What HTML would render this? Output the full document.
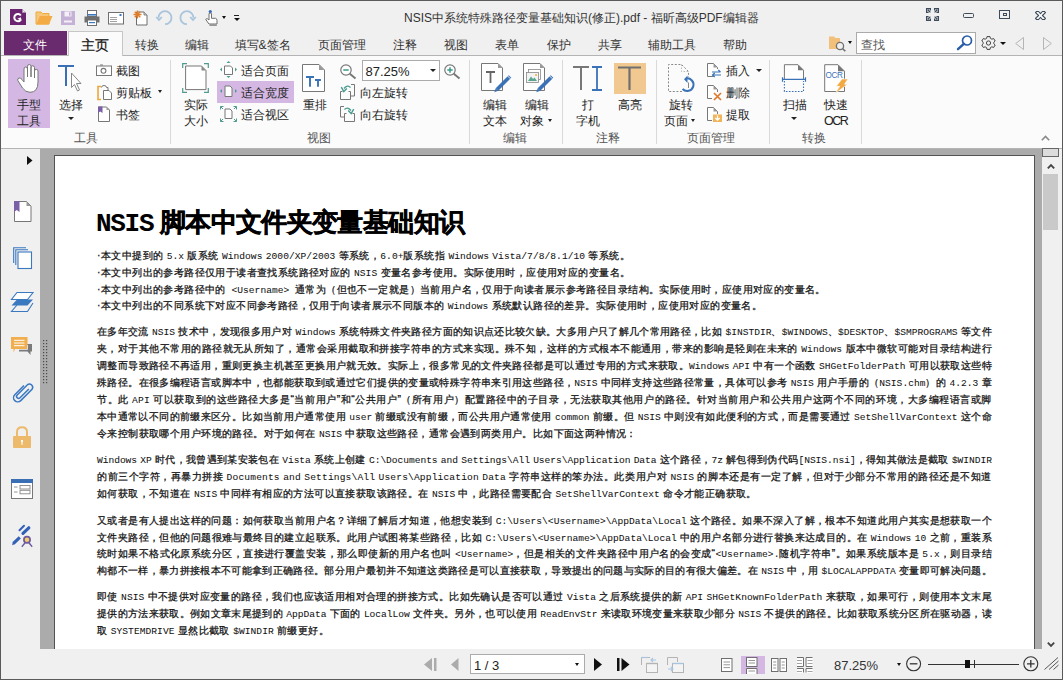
<!DOCTYPE html>
<html><head><meta charset="utf-8">
<style>
*{box-sizing:border-box;margin:0;padding:0}
html,body{width:1063px;height:680px;overflow:hidden}
body{position:relative;background:#f0f0f0;font-family:"Liberation Sans",sans-serif;font-size:12px;color:#222}
.a{position:absolute}
svg{position:absolute;overflow:visible}
.frame{position:absolute;left:0;top:0;width:1063px;height:680px;border:1px solid #5a5a5a;pointer-events:none;z-index:50}
.t{position:absolute;font-size:12px;line-height:12px;color:#222;white-space:nowrap}
.tab{position:absolute;top:39px;font-size:12px;line-height:12px;color:#333;white-space:nowrap}
.ribbon{left:1px;top:55px;width:1061px;height:94px;background:#fbfbfb;border-top:1px solid #b4b4b4;border-bottom:1px solid #b4b4b4}
.gl{position:absolute;top:132px;font-size:12px;line-height:12px;color:#555;white-space:nowrap}
.sep{position:absolute;top:60px;width:1px;height:84px;background:#dadada}
.doc{left:40px;top:149px;width:1002px;height:500px;background:#ababab}
.page{left:54px;top:155px;width:981px;height:494px;background:#fff;border-left:1px solid #525252;border-top:1px solid #525252;border-right:1px solid #525252}
.ln{position:absolute;left:97px;font-size:10.4px;-webkit-text-stroke:0.25px #111;letter-spacing:0.41px;--m:0.04px;line-height:14px;color:#111;white-space:nowrap}
.j{text-align:justify;text-align-last:justify}
.ln i{font-style:normal;font-family:"Liberation Mono",monospace;font-size:9.6px;letter-spacing:var(--m);-webkit-text-stroke:0.05px #111}
i.tm{font-style:normal;font-family:"Liberation Mono",monospace;letter-spacing:-1.3px}
.side{left:1px;top:149px;width:39px;height:500px;background:#f0f0f0}
.status{left:1px;top:649px;width:1061px;height:30px;background:#f0f0f0}
.vs{left:1042px;top:149px;width:20px;height:500px;background:#f0f0f0}
.dd{position:absolute;width:0;height:0;border-left:3px solid transparent;border-right:3px solid transparent;border-top:3px solid #222}
</style></head><body>

<div class="frame"></div>
<!-- ===== title bar ===== -->
<!-- logo -->
<svg style="left:10px;top:9px" width="16" height="16" viewBox="0 0 16 16"><path d="M0 0H12L16 4V16H0Z" fill="#6b2470"/><path d="M12 0L16 4H12Z" fill="#f0f0f0"/><path d="M12.3 0.3V3.7H15.7" fill="none" stroke="#6b2470" stroke-width="0.6"/><path d="M10.8 6.5A3.6 3.6 0 1 0 10.6 11" fill="none" stroke="#fff" stroke-width="2"/><path d="M7.3 9.8L10.8 8.3L11.8 11.8Z" fill="#fff"/></svg>
<!-- folder -->
<svg style="left:36px;top:11px" width="17" height="14" viewBox="0 0 17 14"><path d="M0 1H5L6.5 2.5H13V5H3.5L0 13Z" fill="#f6c67a"/><path d="M0 1H5L6.5 2.5H13V13H0Z" fill="none" stroke="#f0a93c" stroke-width="1"/><path d="M3.5 5H16.5L13 13.5H0Z" fill="#f3ab45"/></svg>
<!-- save -->
<svg style="left:61px;top:11px" width="14" height="14" viewBox="0 0 14 14"><rect x="0" y="0" width="14" height="14" fill="#c5b1d5"/><rect x="3.5" y="0.5" width="7" height="5" fill="#f5f0f8"/><rect x="8" y="1.2" width="1.5" height="3.5" fill="#c5b1d5"/><rect x="3" y="9.5" width="8" height="2" fill="#f5f0f8"/></svg>
<!-- print -->
<svg style="left:84px;top:10px" width="16" height="16" viewBox="0 0 16 16"><rect x="3.5" y="0.5" width="9" height="6" fill="#fff" stroke="#6f6f6f"/><rect x="4" y="4" width="8" height="1.6" fill="#3a78c0"/><path d="M0.5 6.5H15.5V12.5H12.5V10H3.5V12.5H0.5Z" fill="#6f6f6f"/><rect x="3.5" y="10" width="9" height="5.5" fill="#fff" stroke="#6f6f6f"/><rect x="5" y="12" width="6" height="1.2" fill="#3a78c0"/></svg>
<!-- email -->
<svg style="left:108px;top:12px" width="16" height="13" viewBox="0 0 16 13"><rect x="0.5" y="0.5" width="15" height="11.5" fill="#fff" stroke="#6f6f6f"/><rect x="11.5" y="2" width="2" height="2" fill="#3a78c0"/><path d="M2 5.5H9M2 7.5H9M2 9.5H9" stroke="#8a8a8a" stroke-width="0.8"/></svg>
<!-- new -->
<svg style="left:133px;top:10px" width="15" height="16" viewBox="0 0 15 16"><path d="M3.5 2H11L14 5V15H3.5Z" fill="#fff" stroke="#6f6f6f"/><path d="M11 2V5H14" fill="#cfcfcf" stroke="#6f6f6f" stroke-width="0.8"/><path d="M4.5 0.5V8.5M0.5 4.5H8.5M1.7 1.7L7.3 7.3M7.3 1.7L1.7 7.3" stroke="#e07d2a" stroke-width="1.3"/></svg>
<!-- undo / redo -->
<svg style="left:150px;top:5px" width="50" height="25" viewBox="0 0 50 25"><g fill="none" stroke="#a9c4dd" stroke-width="1.8"><path d="M8.5 12.7A6.5 6.5 0 1 1 15 19.2"/><path d="M6.3 12L9 15L11.8 12"/><path d="M43.4 12.7A6.5 6.5 0 1 0 36.9 19.2"/><path d="M40.2 12L43 15L45.8 12"/></g></svg>
<!-- touch hand -->
<svg style="left:205px;top:10px" width="15" height="16" viewBox="0 0 15 16"><circle cx="5.3" cy="1.6" r="1.6" fill="#3868b8"/><path d="M4 3.5V10L2.5 8.8Q0.8 8.3 0.8 9.6L4 14H12V10.5Q12 8.5 10.5 8.3H6.5V3.5Q5.3 2.6 4 3.5Z" fill="#fff" stroke="#6f6f6f" stroke-width="1"/><path d="M4.5 15.2H11.8" stroke="#6f6f6f" stroke-width="1"/></svg>
<div class="dd" style="left:222px;top:16px;border-left-width:2.5px;border-right-width:2.5px;border-top-width:3.5px;border-top-color:#111"></div>
<div class="a" style="left:234px;top:15px;width:5px;height:1px;background:#222"></div>
<div class="dd" style="left:233.5px;top:17.5px;border-top-color:#111;border-top-width:3.5px"></div>
<!-- title -->
<div class="t" id="ttl" style="left:404px;top:12px;color:#333">NSIS中系统特殊路径变量基础知识(修正).pdf - 福昕高级PDF编辑器</div>
<!-- window controls -->
<svg style="left:926px;top:8px" width="13" height="13" viewBox="0 0 13 13"><path d="M2.6 4.4H0.6V0.6H4.4V2.6M1.8 1.8L4.4 4.4M10.4 4.4H12.4V0.6H8.6V2.6M11.2 1.8L8.6 4.4M2.6 8.6H0.6V12.4H4.4V10.4M1.8 11.2L4.4 8.6M10.4 8.6H12.4V12.4H8.6V10.4M11.2 11.2L8.6 8.6" fill="none" stroke="#3e4b5b" stroke-width="1.25"/></svg>
<div class="a" style="left:963px;top:13px;width:11px;height:5px;border:1.3px solid #3e4b5b;border-radius:1.5px"></div>
<div class="a" style="left:999px;top:10px;width:11px;height:9px;border:1.3px solid #3e4b5b"></div>
<div class="a" style="left:1002.5px;top:13.3px;width:4px;height:2.5px;border:1px solid #3e4b5b"></div>
<svg style="left:1035px;top:11px" width="11" height="9" viewBox="0 0 11 9"><path d="M0.5 1.6L1.6 0.5H3.6L5.5 2.7L7.4 0.5H9.4L10.5 1.6L7.4 4.5L10.5 7.4L9.4 8.5H7.4L5.5 6.3L3.6 8.5H1.6L0.5 7.4L3.6 4.5Z" fill="#fbfbfb" stroke="#3e4b5b" stroke-width="1.1" stroke-linejoin="round"/></svg>

<!-- ===== tabs ===== -->
<div class="a" style="left:4px;top:31px;width:63px;height:24px;background:#6a2a6e"></div>
<div class="tab" style="left:22.5px;top:39px;color:#fff">文件</div>
<div class="a" style="left:68px;top:31px;width:55px;height:25px;background:#fbfbfb;border:1px solid #c6c6c6;border-bottom:none;z-index:2"></div>
<div class="tab" style="left:81px;top:38px;font-size:14px;line-height:14px;color:#111;z-index:3;-webkit-text-stroke:0.2px #111">主页</div>
<div class="tab" style="left:134.5px">转换</div>
<div class="tab" style="left:184.5px">编辑</div>
<div class="tab" style="left:234.5px">填写&amp;签名</div>
<div class="tab" style="left:318px">页面管理</div>
<div class="tab" style="left:392.5px">注释</div>
<div class="tab" style="left:444px">视图</div>
<div class="tab" style="left:495px">表单</div>
<div class="tab" style="left:546.5px">保护</div>
<div class="tab" style="left:597.5px">共享</div>
<div class="tab" style="left:648px">辅助工具</div>
<div class="tab" style="left:723px">帮助</div>
<!-- search area -->
<svg style="left:829px;top:36px" width="17" height="16" viewBox="0 0 17 16"><path d="M0 0.5H5L6.5 2H11V13H0Z" fill="#f2c07a"/><circle cx="11" cy="10" r="3.6" fill="#f0f0f0" stroke="#6f6f6f" stroke-width="1.3"/><path d="M13.5 12.5L16.3 15.3" stroke="#6f6f6f" stroke-width="1.6"/></svg>
<div class="dd" style="left:848px;top:41px;border-left-width:2.5px;border-right-width:2.5px;border-top-width:3px;border-top-color:#111"></div>
<div class="a" style="left:856px;top:32px;width:120px;height:22px;background:#fff;border:1px solid #ababab"></div>
<div class="t" style="left:860.5px;top:38.5px;color:#555">查找</div>
<svg style="left:957px;top:35px" width="16" height="15" viewBox="0 0 16 15"><circle cx="10" cy="5.5" r="4.5" fill="none" stroke="#2a5da8" stroke-width="1.7"/><path d="M6.8 8.8L1 14.2" stroke="#2a5da8" stroke-width="2.4" stroke-linecap="round"/></svg>
<svg style="left:981px;top:36px" width="15" height="14" viewBox="0 0 15 14"><path d="M6 0.6H9L9.4 2.4L10.9 3.2L12.6 2.5L14.2 5L12.8 6.3V7.7L14.2 9L12.6 11.5L10.9 10.8L9.4 11.6L9 13.4H6L5.6 11.6L4.1 10.8L2.4 11.5L0.8 9L2.2 7.7V6.3L0.8 5L2.4 2.5L4.1 3.2L5.6 2.4Z" fill="none" stroke="#454545" stroke-width="1"/><circle cx="7.5" cy="7" r="2.1" fill="none" stroke="#454545" stroke-width="1"/></svg>
<div class="dd" style="left:999.5px;top:41.5px;border-left-width:3px;border-right-width:3px;border-top-width:3.5px;border-top-color:#111"></div>
<svg style="left:1015px;top:37px" width="9" height="13" viewBox="0 0 9 13"><path d="M8.5 0.5V12.5L0.7 6.5Z" fill="none" stroke="#b5b5b5" stroke-width="1"/></svg>
<svg style="left:1043px;top:37px" width="9" height="13" viewBox="0 0 9 13"><path d="M0.5 0.5V12.5L8.3 6.5Z" fill="none" stroke="#b5b5b5" stroke-width="1"/></svg>

<!-- ===== ribbon ===== -->
<div class="a ribbon"></div>
<!-- group: tools -->
<div class="a" style="left:8px;top:59px;width:42px;height:69px;background:#d4b8e3"></div>
<svg style="left:17px;top:64px" width="24" height="29" viewBox="0 0 24 29"><path d="M7 15V5Q7 3 8.8 3Q10.5 3 10.5 5V13V2.3Q10.5 0.5 12.3 0.5Q14 0.5 14 2.3V13V3.5Q14 1.8 15.8 1.8Q17.5 1.8 17.5 3.5V14V7Q17.5 5.3 19.2 5.3Q21 5.3 21 7V18Q21 28.3 13 28.3Q8.5 28.3 5.5 24L0.8 16.5Q0.2 14.5 2 14Q3.5 13.7 5 15.5L7 18Z" fill="#fff" stroke="#777" stroke-width="1"/></svg>
<div class="t" style="left:17px;top:99px">手型</div>
<div class="t" style="left:17px;top:115px">工具</div>
<svg style="left:58px;top:65px" width="26" height="27" viewBox="0 0 26 27"><path d="M0 1H16M8 1V21" stroke="#3b6fb5" stroke-width="2"/><path d="M13.5 8V22.5L16.5 19.5L19.5 26L21.5 25L18.5 18.5H23Z" fill="#fff" stroke="#888" stroke-width="1"/></svg>
<div class="t" style="left:58.5px;top:99px">选择</div>
<div class="dd" style="left:67.5px;top:117px;border-left-width:3px;border-right-width:3px;border-top-width:3px"></div>
<svg style="left:96px;top:64px" width="16" height="12" viewBox="0 0 16 12"><path d="M4 1.5H7V0.5H4Z" fill="#777"/><rect x="0.5" y="2" width="15" height="9.5" fill="#fff" stroke="#777"/><circle cx="7.5" cy="6.8" r="2.4" fill="none" stroke="#777" stroke-width="1.1"/></svg>
<div class="t" style="left:116px;top:65px">截图</div>
<svg style="left:97px;top:85px" width="15" height="15" viewBox="0 0 15 15"><path d="M4 1.5H1V14.5H4" fill="none" stroke="#f0a63a" stroke-width="1.6"/><path d="M4.5 2.5Q4.5 0.5 7 0.5Q9.5 0.5 9.5 2.5H11V5" fill="none" stroke="#777" stroke-width="1"/><path d="M6.5 5.5H12L14.5 8V14.5H6.5Z" fill="#fff" stroke="#777"/></svg>
<div class="t" style="left:116px;top:87px">剪贴板</div>
<div class="dd" style="left:158px;top:90px;border-left-width:2.7px;border-right-width:2.7px;border-top-width:3px"></div>
<svg style="left:98px;top:106px" width="12" height="16" viewBox="0 0 12 16"><path d="M0.5 1H8.5L11.5 4V15.5H0.5Z" fill="#fff" stroke="#777"/><path d="M8.5 1V4H11.5" fill="#999"/><path d="M0 0.5H4.5V7L2.2 5.5L0 7Z" fill="#7b5ea8"/></svg>
<div class="t" style="left:116px;top:109px">书签</div>
<div class="gl" style="left:74px">工具</div>
<div class="sep" style="left:170px"></div>
<!-- group: view -->
<svg style="left:182px;top:63px" width="28" height="30" viewBox="0 0 28 30"><path d="M0.7 5V0.7H5M22 0.7H26.3V5M0.7 25V29.3H5M22 29.3H26.3V25" fill="none" stroke="#4f9a8e" stroke-width="1.2"/><path d="M3.6 3H19.5L24 7.5V26.6H3.6Z" fill="#fff" stroke="#777" stroke-width="1"/><path d="M19.5 3V7.5H24Z" fill="#888"/></svg>
<div class="t" style="left:184px;top:99px">实际</div>
<div class="t" style="left:184px;top:115px">大小</div>
<svg style="left:220px;top:61px" width="17" height="17" viewBox="0 0 17 17"><path d="M4.5 5H10.5L12.5 7V13.5H4.5Z" fill="#fff" stroke="#777"/><path d="M8.5 0L10.5 2H6.5ZM8.5 17L10.5 15H6.5ZM0 8.5L2 6.5V10.5ZM17 8.5L15 6.5V10.5Z" fill="#4f9a8e"/></svg>
<div class="t" style="left:241px;top:65px">适合页面</div>
<div class="a" style="left:217px;top:81px;width:77px;height:22px;background:#d4b8e3"></div>
<svg style="left:220px;top:84px" width="17" height="14" viewBox="0 0 17 14"><path d="M5 2H10L12 4V12.5H5Z" fill="#fff" stroke="#777"/><path d="M0 7L2 5V9ZM17 7L15 5V9Z" fill="#4f9a8e"/></svg>
<div class="t" style="left:241px;top:87px">适合宽度</div>
<svg style="left:220px;top:106px" width="17" height="16" viewBox="0 0 17 16"><path d="M5 3H10L12 5V12.5H5Z" fill="#fff" stroke="#777"/><path d="M0.5 3.5V0.5H3.5M13.5 0.5H16.5V3.5M0.5 12.5V15.5H3.5M13.5 15.5H16.5V12.5M0.7 0.7L3 3M16.3 0.7L14 3M0.7 15.3L3 13M16.3 15.3L14 13" fill="none" stroke="#4f9a8e" stroke-width="1"/></svg>
<div class="t" style="left:241px;top:109px">适合视区</div>
<svg style="left:302px;top:64px" width="23" height="28" viewBox="0 0 23 28"><path d="M0.5 0.5H17L22.5 6V27.5H0.5Z" fill="#fff" stroke="#777"/><path d="M17 0.5V6H22.5Z" fill="#999"/><path d="M4 13H12M8 13V22.7M13 16H18.9M16 16V22.7" stroke="#3a72b8" stroke-width="1.9"/></svg>
<div class="t" style="left:303px;top:99px">重排</div>
<svg style="left:340px;top:64px" width="17" height="15" viewBox="0 0 17 15"><circle cx="6" cy="6" r="5.2" fill="#fff" stroke="#777" stroke-width="1.2"/><path d="M3.3 6H8.7" stroke="#3a9a8a" stroke-width="1.5"/><path d="M9.8 9.8L15.5 14.5" stroke="#777" stroke-width="2"/></svg>
<div class="a" style="left:362px;top:59.5px;width:78px;height:21px;background:#fff;border:1px solid #ababab"></div>
<div class="a" style="left:365.5px;top:64.5px;font-size:13px;line-height:13px;color:#222">87.25%</div>
<div class="dd" style="left:429.5px;top:69px;border-left-width:3px;border-right-width:3px;border-top-width:3px"></div>
<svg style="left:444px;top:64px" width="17" height="15" viewBox="0 0 17 15"><circle cx="6" cy="6" r="5.2" fill="#fff" stroke="#777" stroke-width="1.2"/><path d="M3.3 6H8.7M6 3.3V8.7" stroke="#3a9a8a" stroke-width="1.5"/><path d="M9.8 9.8L15.5 14.5" stroke="#777" stroke-width="2"/></svg>
<svg style="left:340px;top:84px" width="15" height="16" viewBox="0 0 15 16"><path d="M11 0.5H14.5V12H11" fill="none" stroke="#777" stroke-width="1"/><path d="M0.5 7.5V15.5H10.5V7.5M0.5 7.5H2.5M8.5 7.5H10.5" fill="none" stroke="#777" stroke-width="1"/><path d="M10.5 3.5Q7.5 0.2 4 4.5" fill="none" stroke="#4a9a8e" stroke-width="1.3"/><path d="M1.3 3.2L3.8 7.5L6.8 4.5" fill="none" stroke="#4a9a8e" stroke-width="1.4"/></svg>
<div class="t" style="left:360px;top:87px">向左旋转</div>
<svg style="left:340px;top:106px" width="15" height="16" viewBox="0 0 15 16"><path d="M4 0.5H0.5V11H4" fill="none" stroke="#777" stroke-width="1"/><path d="M4.5 7.5V15.5H14.5V7.5M4.5 7.5H6.5M12.5 7.5H14.5" fill="none" stroke="#777" stroke-width="1"/><path d="M4.5 3.5Q7.5 0.2 11 4.5" fill="none" stroke="#4a9a8e" stroke-width="1.3"/><path d="M13.7 3.2L11.2 7.5L8.2 4.5" fill="none" stroke="#4a9a8e" stroke-width="1.4"/></svg>
<div class="t" style="left:360px;top:109px">向右旋转</div>
<div class="gl" style="left:307px">视图</div>
<div class="sep" style="left:469px"></div>
<!-- group: edit -->
<svg style="left:481px;top:63px" width="31" height="30" viewBox="0 0 31 30"><path d="M0.5 0.5H17L21.5 5V27.5H0.5Z" fill="#fff" stroke="#777"/><path d="M17 0.5V5H21.5Z" fill="#999"/><path d="M5 9H14M9.5 9V20" stroke="#666" stroke-width="1.8"/><path d="M17.3 27.8L30.3 14.8L27.7 12.2L14.7 25.2Z" fill="#3a72b8"/><path d="M17.3 27.8L14.7 25.2L13.3 29.2Z" fill="#3a72b8"/><path d="M26.2 12.6L29.4 15.8" stroke="#fbfbfb" stroke-width="0.9"/></svg>
<div class="t" style="left:483px;top:99px">编辑</div>
<div class="t" style="left:483px;top:115px">文本</div>
<svg style="left:523px;top:63px" width="31" height="30" viewBox="0 0 31 30"><path d="M0.5 0.5H17L21.5 5V27.5H0.5Z" fill="#fff" stroke="#777"/><path d="M17 0.5V5H21.5Z" fill="#999"/><rect x="5.5" y="6.5" width="12" height="10" fill="#fff" stroke="#888" stroke-width="0.8"/><rect x="3.5" y="9.5" width="12" height="10" fill="#f3f3f3" stroke="#888" stroke-width="0.8"/><path d="M5 18L8 13.5L10 16L11.5 14.5L14 18Z" fill="#5aa58e"/><circle cx="13" cy="12" r="1" fill="#f0b040"/><path d="M17.3 27.8L30.3 14.8L27.7 12.2L14.7 25.2Z" fill="#3a72b8"/><path d="M17.3 27.8L14.7 25.2L13.3 29.2Z" fill="#3a72b8"/><path d="M26.2 12.6L29.4 15.8" stroke="#fbfbfb" stroke-width="0.9"/></svg>
<div class="t" style="left:525px;top:99px">编辑</div>
<div class="t" style="left:520px;top:115px">对象</div>
<div class="dd" style="left:547.5px;top:118.5px;border-left-width:2.7px;border-right-width:2.7px;border-top-width:3px"></div>
<div class="gl" style="left:503px">编辑</div>
<div class="sep" style="left:562px"></div>
<!-- group: comment -->
<svg style="left:573px;top:66px" width="30" height="25" viewBox="0 0 30 25"><path d="M0 1H16M8 1V24" stroke="#777" stroke-width="2"/><path d="M19 1H29M24 1V24M19 24H29" stroke="#3a72b8" stroke-width="1.8"/></svg>
<div class="t" style="left:581.5px;top:99px">打</div>
<div class="t" style="left:576px;top:115px">字机</div>
<div class="a" style="left:614px;top:63px;width:32px;height:31px;background:#f1c88f"></div>
<svg style="left:618px;top:66px" width="24" height="25" viewBox="0 0 24 25"><path d="M0 1.5H23M11.5 1.5V24" stroke="#707070" stroke-width="2.2"/></svg>
<div class="t" style="left:618px;top:99px">高亮</div>
<div class="gl" style="left:596px">注释</div>
<div class="sep" style="left:655.5px"></div>
<!-- group: page management -->
<svg style="left:667px;top:63px" width="31" height="30" viewBox="0 0 31 30"><path d="M15 28.5H1.5V1.5H14.5L21.5 8.5V14" fill="none" stroke="#8a8a8a" stroke-width="1" stroke-dasharray="2 1.6"/><path d="M14.5 1.5V8.5H21.5" fill="none" stroke="#aaa" stroke-width="0.8" stroke-dasharray="1.5 1.5"/><path d="M19 15.5A6.3 6.3 0 1 1 15.6 26" fill="none" stroke="#3a72b8" stroke-width="2"/><path d="M17 16.3L20.5 12.5V20Z" fill="#3a72b8"/><path d="M21.5 19.5V25" stroke="#777" stroke-width="0.9"/></svg>
<div class="t" style="left:669px;top:99px">旋转</div>
<div class="t" style="left:663.5px;top:115px">页面</div>
<div class="dd" style="left:691px;top:119px;border-left-width:2.7px;border-right-width:2.7px;border-top-width:3px"></div>
<svg style="left:707px;top:63px" width="15" height="15" viewBox="0 0 15 15"><path d="M6.5 13.5H0.5V0.5H6.5L10.5 4.5V6" fill="#fff" stroke="#777"/><path d="M6.5 0.5V4.5H10.5Z" fill="#999"/><path d="M5 9H13.5M11.3 7L13.5 9M14 12H5.5M7.7 10L5.5 12L7.7 14" fill="none" stroke="#3a72b8" stroke-width="1.2"/></svg>
<div class="t" style="left:726px;top:65px">插入</div>
<div class="dd" style="left:756px;top:68.5px;border-left-width:3px;border-right-width:3px;border-top-width:3px"></div>
<svg style="left:707px;top:85px" width="15" height="16" viewBox="0 0 15 16"><path d="M5 13.5H0.5V0.5H6.5L10.5 4.5V7" fill="#fff" stroke="#777"/><path d="M6.5 0.5V4.5H10.5Z" fill="#999"/><path d="M7 8L14 15M14 8L7 15" stroke="#de7a2e" stroke-width="1.7"/></svg>
<div class="t" style="left:726px;top:87px">删除</div>
<svg style="left:707px;top:107px" width="15" height="15" viewBox="0 0 15 15"><path d="M5 13.5H0.5V0.5H6.5L10.5 4.5V7" fill="#fff" stroke="#777"/><path d="M6.5 0.5V4.5H10.5Z" fill="#999"/><rect x="6" y="7.5" width="9" height="7.5" fill="#f2b45a"/><path d="M10.5 8.5V13M8.3 11L10.5 13.2L12.7 11" fill="none" stroke="#fff" stroke-width="1.3"/></svg>
<div class="t" style="left:726px;top:109px">提取</div>
<div class="gl" style="left:687px">页面管理</div>
<div class="sep" style="left:768.5px"></div>
<!-- group: convert -->
<svg style="left:776px;top:58px" width="32" height="38" viewBox="0 0 32 38"><path d="M8.4 21V6.7H22L27.5 12.2V21" fill="#fff" stroke="#777"/><path d="M22 6.7V12.2H27.5Z" fill="#777"/><path d="M6.5 21.4H29.5M6.5 19.2V23.7M29.5 19.2V23.7" stroke="#3a72b8" stroke-width="1.2"/><path d="M8.4 23V33.5H27.5V23" fill="none" stroke="#3a72b8" stroke-width="1.1" stroke-dasharray="1.6 1.4"/></svg>
<div class="t" style="left:783px;top:99px">扫描</div>
<div class="dd" style="left:790.5px;top:117px;border-left-width:3px;border-right-width:3px;border-top-width:3px"></div>
<svg style="left:816px;top:58px" width="40" height="38" viewBox="0 0 40 38"><path d="M8.7 33.5V6.7H22L28.5 13.2V33.5Z" fill="#fff" stroke="#777"/><path d="M22 6.7V13.2H28.5Z" fill="#777"/><text x="9.6" y="20.2" font-family="Liberation Sans" font-size="8.2" letter-spacing="-0.5" fill="#3a72b8">OCR</text><path d="M26 21H32L28.3 26.3H31.5L19 35.5L23.8 28.3H20.3Z" fill="#f2aa40" stroke="#fbfbfb" stroke-width="0.6"/></svg>
<div class="t" style="left:824px;top:99px">快速</div>
<div class="t" style="left:824px;top:114.5px;color:#222;font-size:12.5px;letter-spacing:-1.5px">OCR</div>
<div class="gl" style="left:801.5px">转换</div>
<div class="sep" style="left:861px"></div>
<svg style="left:1041px;top:135px" width="9" height="6" viewBox="0 0 9 6"><path d="M0.8 5.2L4.5 1.5L8.2 5.2" fill="none" stroke="#8a8a8a" stroke-width="1.6"/></svg>

<!-- ===== doc area ===== -->
<div class="a side"></div>
<div class="a doc"></div>
<div class="a page"></div>
<div class="a" style="left:96px;top:207px;font-size:26px;font-weight:bold;color:#000;white-space:nowrap;line-height:30px;letter-spacing:-0.62px;-webkit-text-stroke:0.45px #000"><i class="tm" style="-webkit-text-stroke:0">NSIS</i> 脚本中文件夹变量基础知识</div>
<div class="ln" style="top:248.8px">·本文中提到的 <i>5.x</i> 版系统 <i>Windows</i> <i>2000/XP/2003</i> 等系统，<i>6.0+</i>版系统指 <i>Windows</i> <i>Vista/7/8/8.1/10</i> 等系统。</div>
<div class="ln" style="top:265.7px">·本文中列出的参考路径仅用于读者查找系统路径对应的 <i>NSIS</i> 变量名参考使用。实际使用时，应使用对应的变量名。</div>
<div class="ln" style="top:282.5px">·本文中列出的参考路径中的 <i>&lt;Username&gt;</i> 通常为（但也不一定就是）当前用户名，仅用于向读者展示参考路径目录结构。实际使用时，应使用对应的变量名。</div>
<div class="ln" style="top:299.4px">·本文中列出的不同系统下对应不同参考路径，仅用于向读者展示不同版本的 <i>Windows</i> 系统默认路径的差异。实际使用时，应使用对应的变量名。</div>
<div class="ln" style="top:325.0px;letter-spacing:0.358px;--m:-0.012px">在多年交流 <i>NSIS</i> 技术中，发现很多用户对 <i>Windows</i> 系统特殊文件夹路径方面的知识点还比较欠缺。大多用户只了解几个常用路径，比如 <i>$INSTDIR</i>、<i>$WINDOWS</i>、<i>$DESKTOP</i>、<i>$SMPROGRAMS</i> 等文件</div>
<div class="ln" style="top:342.0px;letter-spacing:0.461px;--m:0.091px">夹，对于其他不常用的路径就无从所知了，通常会采用截取和拼接字符串的方式来实现。殊不知，这样的方式根本不能通用，带来的影响是轻则在未来的 <i>Windows</i> 版本中微软可能对目录结构进行</div>
<div class="ln" style="top:359.0px;letter-spacing:0.387px;--m:0.017px">调整而导致路径不再适用，重则更换主机甚至更换用户就无效。实际上，很多常见的文件夹路径都是可以通过专用的方式来获取。<i>Windows</i> <i>API</i> 中有一个函数 <i>SHGetFolderPath</i> 可用以获取这些特</div>
<div class="ln" style="top:376.0px;letter-spacing:0.377px;--m:0.007px">殊路径。在很多编程语言或脚本中，也都能获取到或通过它们提供的变量或特殊字符串来引用这些路径，<i>NSIS</i> 中同样支持这些路径常量，具体可以参考 <i>NSIS</i> 用户手册的（<i>NSIS.chm</i>）的 <i>4.2.3</i> 章</div>
<div class="ln" style="top:393.0px;letter-spacing:0.547px;--m:0.177px">节。此 <i>API</i> 可以获取到的这些路径大多是“当前用户”和“公共用户”（所有用户）配置路径中的子目录，无法获取其他用户的路径。针对当前用户和公共用户这两个不同的环境，大多编程语言或脚</div>
<div class="ln" style="top:410.0px;letter-spacing:0.372px;--m:0.002px">本中通常以不同的前缀来区分。比如当前用户通常使用 <i>user</i> 前缀或没有前缀，而公共用户通常使用 <i>common</i> 前缀。但 <i>NSIS</i> 中则没有如此便利的方式，而是需要通过 <i>SetShellVarContext</i> 这个命</div>
<div class="ln" style="top:427.0px">令来控制获取哪个用户环境的路径。对于如何在 <i>NSIS</i> 中获取这些路径，通常会遇到两类用户。比如下面这两种情况：</div>
<div class="ln" style="top:452.8px;letter-spacing:0.334px;--m:-0.036px"><i>Windows</i> <i>XP</i> 时代，我曾遇到某安装包在 <i>Vista</i> 系统上创建 <i>C:\Documents</i> <i>and</i> <i>Settings\All</i> <i>Users\Application</i> <i>Data</i> 这个路径，<i>7z</i> 解包得到伪代码<i>[NSIS.nsi]</i>，得知其做法是截取 <i>$WINDIR</i></div>
<div class="ln" style="top:469.7px;letter-spacing:0.516px;--m:0.146px">的前三个字符，再暴力拼接 <i>Documents</i> <i>and</i> <i>Settings\All</i> <i>Users\Application</i> <i>Data</i> 字符串这样的笨办法。此类用户对 <i>NSIS</i> 的脚本还是有一定了解，但对于少部分不常用的路径还是不知道</div>
<div class="ln" style="top:486.6px">如何获取，不知道在 <i>NSIS</i> 中同样有相应的方法可以直接获取该路径。在 <i>NSIS</i> 中，此路径需要配合 <i>SetShellVarContext</i> 命令才能正确获取。</div>
<div class="ln" style="top:513.6px;letter-spacing:0.406px;--m:0.036px">又或者是有人提出这样的问题：如何获取当前用户名？详细了解后才知道，他想安装到 <i>C:\Users\&lt;Username&gt;\AppData\Local</i> 这个路径。如果不深入了解，根本不知道此用户其实是想获取一个</div>
<div class="ln" style="top:530.5px;letter-spacing:0.410px;--m:0.040px">文件夹路径，但他的问题很难与最终目的建立起联系。此用户试图将某些路径，比如 <i>C:\Users\&lt;Username&gt;\AppData\Local</i> 中的用户名部分进行替换来达成目的。在 <i>Windows</i> <i>10</i> 之前，重装系</div>
<div class="ln" style="top:547.4px;letter-spacing:0.434px;--m:0.064px">统时如果不格式化原系统分区，直接进行覆盖安装，那么即使新的用户名也叫 <i>&lt;Username&gt;</i>，但是相关的文件夹路径中用户名的会变成“<i>&lt;Username&gt;.</i>随机字符串”。如果系统版本是 <i>5.x</i>，则目录结</div>
<div class="ln" style="top:564.3px;letter-spacing:0.328px;--m:-0.042px">构都不一样，暴力拼接根本不可能拿到正确路径。部分用户最初并不知道这类路径是可以直接获取，导致提出的问题与实际的目的有很大偏差。在 <i>NSIS</i> 中，用 <i>$LOCALAPPDATA</i> 变量即可解决问题。</div>
<div class="ln" style="top:590.4px;letter-spacing:0.403px;--m:0.033px">即使 <i>NSIS</i> 中不提供对应变量的路径，我们也应该适用相对合理的拼接方式。比如先确认是否可以通过 <i>Vista</i> 之后系统提供的新 <i>API</i> <i>SHGetKnownFolderPath</i> 来获取，如果可行，则使用本文末尾</div>
<div class="ln" style="top:607.3px;letter-spacing:0.339px;--m:-0.031px">提供的方法来获取。例如文章末尾提到的 <i>AppData</i> 下面的 <i>LocalLow</i> 文件夹。另外，也可以使用 <i>ReadEnvStr</i> 来读取环境变量来获取少部分 <i>NSIS</i> 不提供的路径。比如获取系统分区所在驱动器，读</div>
<div class="ln" style="top:624.2px">取 <i>SYSTEMDRIVE</i> 显然比截取 <i>$WINDIR</i> 前缀更好。</div>

<!-- sidebar -->
<svg style="left:27px;top:156px" width="6" height="9" viewBox="0 0 6 9"><path d="M0 0L5.5 4.5L0 9Z" fill="#111"/></svg>
<svg style="left:14px;top:201px" width="18" height="21" viewBox="0 0 18 21"><path d="M0.5 0.5H12.5L17 5V20.5H0.5Z" fill="#fff" stroke="#777"/><path d="M12.5 0.5V5H17Z" fill="#999"/><path d="M0 0H5.5V11L2.75 9L0 11Z" fill="#7b5ea8"/></svg>
<svg style="left:12.5px;top:246.5px" width="19" height="22" viewBox="0 0 19 22"><path d="M0.7 16V0.7H13" fill="none" stroke="#3a78c0" stroke-width="1.1"/><path d="M2.8 18V2.8H15" fill="none" stroke="#3a78c0" stroke-width="1.1"/><rect x="5" y="5" width="13.5" height="16.5" fill="#fff" stroke="#3a78c0" stroke-width="1.1"/></svg>
<svg style="left:11px;top:292px" width="23" height="21" viewBox="0 0 23 21"><path d="M6 0.5H22L16.5 7.5H0.5Z" fill="#fff" stroke="#3a78c0" stroke-width="1.1"/><path d="M6 7.5H22L16.5 13.5H0.5Z" fill="#3a78c0"/><path d="M22 11L16.5 19.5H0.5L6 13" fill="none" stroke="#3a78c0" stroke-width="1.1"/></svg>
<svg style="left:11px;top:337px" width="22" height="21" viewBox="0 0 22 21"><path d="M8 7H21V14.5H19.5V18L16.5 14.5H8Z" fill="#7a7a7a"/><path d="M0 0H16.5V12H4L2.5 15.5V12H0Z" fill="#f0ae4f"/><path d="M3 3.3H13.5M3 6H13.5M3 8.7H13.5" stroke="#fff" stroke-width="1"/><path d="M16.5 8V12.5H4" fill="none" stroke="#f0f0f0" stroke-width="0.8"/></svg>
<svg style="left:12px;top:381px" width="21" height="23" viewBox="0 0 21 23"><g transform="translate(10.5 11.5) rotate(45) translate(-4.5 -13)"><path d="M6.5 6V18.5A2 2 0 0 1 2.5 18.5V4A3.3 3.3 0 0 1 9 4V20A4.2 4.2 0 0 1 0.6 20V7" fill="none" stroke="#3a78c0" stroke-width="1.5"/></g></svg>
<svg style="left:13px;top:426px" width="18" height="22" viewBox="0 0 18 22"><path d="M4 10V6Q4 1.3 9 1.3Q14 1.3 14 6V10" fill="none" stroke="#edb96a" stroke-width="2"/><rect x="0" y="10" width="18" height="12" rx="1" fill="#edb96a"/><path d="M8 14H10V15.5L9.5 16.5V19H8.5V16.5L8 15.5Z" fill="#fff"/></svg>
<svg style="left:11px;top:479px" width="22" height="20" viewBox="0 0 22 20"><rect x="0.5" y="0.5" width="21" height="19" fill="#fff" stroke="#777"/><rect x="0" y="0" width="22" height="4" fill="#3a6fb5"/><path d="M3 8H6.5M3 13H6.5" stroke="#888" stroke-width="0.9"/><rect x="9" y="6.5" width="10" height="3.5" fill="none" stroke="#888" stroke-width="0.9"/><rect x="9" y="11.3" width="10" height="3.5" fill="none" stroke="#888" stroke-width="0.9"/></svg>
<svg style="left:8px;top:520px" width="30" height="30" viewBox="0 0 30 30"><g stroke="#3461b8" stroke-linecap="round"><path d="M11.5 10.2L16 5.8" stroke-width="2"/><path d="M15 13.3L20.8 7.8" stroke-width="3.2"/></g><path d="M5.5 23.3L11.8 17.3" stroke="#3461b8" stroke-width="3.2"/><path d="M4 25.2L5 21.8L7.2 24Z" fill="#3461b8"/><path d="M17.3 22.5L13.8 26.8M20.7 22.5L24.2 26.8" stroke="#6e5aa0" stroke-width="1.4"/><circle cx="19" cy="19.8" r="3.1" fill="#f3cf6a" stroke="#6e5aa0" stroke-width="1.7"/></svg>
<!-- splitter dots -->
<svg style="left:42.5px;top:340px" width="5" height="45" viewBox="0 0 5 45"><g fill="#4a4a4a"><rect x="0" y="0" width="1.2" height="1.2"/><rect x="3" y="0" width="1.2" height="1.2"/><rect x="0" y="3" width="1.2" height="1.2"/><rect x="3" y="3" width="1.2" height="1.2"/><rect x="0" y="6" width="1.2" height="1.2"/><rect x="3" y="6" width="1.2" height="1.2"/><rect x="0" y="9" width="1.2" height="1.2"/><rect x="3" y="9" width="1.2" height="1.2"/><rect x="0" y="12" width="1.2" height="1.2"/><rect x="3" y="12" width="1.2" height="1.2"/><rect x="0" y="15" width="1.2" height="1.2"/><rect x="3" y="15" width="1.2" height="1.2"/><rect x="0" y="18" width="1.2" height="1.2"/><rect x="3" y="18" width="1.2" height="1.2"/><rect x="0" y="21" width="1.2" height="1.2"/><rect x="3" y="21" width="1.2" height="1.2"/><rect x="0" y="24" width="1.2" height="1.2"/><rect x="3" y="24" width="1.2" height="1.2"/><rect x="0" y="27" width="1.2" height="1.2"/><rect x="3" y="27" width="1.2" height="1.2"/><rect x="0" y="30" width="1.2" height="1.2"/><rect x="3" y="30" width="1.2" height="1.2"/><rect x="0" y="33" width="1.2" height="1.2"/><rect x="3" y="33" width="1.2" height="1.2"/><rect x="0" y="36" width="1.2" height="1.2"/><rect x="3" y="36" width="1.2" height="1.2"/><rect x="0" y="39" width="1.2" height="1.2"/><rect x="3" y="39" width="1.2" height="1.2"/><rect x="0" y="42" width="1.2" height="1.2"/><rect x="3" y="42" width="1.2" height="1.2"/></g></svg>

<!-- right scrollbar -->
<div class="a vs"></div>
<div class="a" style="left:1042px;top:148px;width:17px;height:9px;background:#dcdcdc;border:1px solid #666"></div>
<svg style="left:1047px;top:163px" width="8" height="6" viewBox="0 0 8 6"><path d="M0.8 5.3L4 2L7.2 5.3" fill="none" stroke="#444" stroke-width="1.8"/></svg>
<div class="a" style="left:1043px;top:174px;width:15px;height:56px;background:#c9c9c9"></div>
<svg style="left:1047px;top:642px" width="8" height="6" viewBox="0 0 8 6"><path d="M0.8 0.7L4 4L7.2 0.7" fill="none" stroke="#444" stroke-width="1.8"/></svg>

<!-- ===== status bar ===== -->
<div class="a status"></div>
<svg style="left:424px;top:658px" width="13" height="13" viewBox="0 0 13 13"><path d="M8 0V13L0 6.5Z" fill="#ababab"/><rect x="10" y="0" width="2.5" height="13" fill="#ababab"/></svg>
<svg style="left:451px;top:658px" width="8" height="13" viewBox="0 0 8 13"><path d="M7.5 0V13L0 6.5Z" fill="#ababab"/></svg>
<div class="a" style="left:470px;top:654px;width:115px;height:20px;background:#fff;border:1px solid #ababab"></div>
<div class="a" style="left:474px;top:659px;font-size:13px;line-height:13px;color:#222">1 / 3</div>
<div class="dd" style="left:575px;top:662.5px;border-left-width:2.5px;border-right-width:2.5px;border-top-width:3.5px;border-top-color:#111"></div>
<svg style="left:593.5px;top:658px" width="8" height="13" viewBox="0 0 8 13"><path d="M0 0V13L8 6.5Z" fill="#111"/></svg>
<svg style="left:617px;top:658px" width="13" height="13" viewBox="0 0 13 13"><rect x="0" y="0" width="2.5" height="13" fill="#111"/><path d="M4.5 0V13L12.5 6.5Z" fill="#111"/></svg>
<svg style="left:641px;top:657px" width="17" height="16" viewBox="0 0 17 16"><path d="M0.5 8V0.5H9" fill="none" stroke="#b4b4b4"/><path d="M0 0.5H7" stroke="#a9c4dd" stroke-width="1.2"/><rect x="5.5" y="6.5" width="11" height="9" fill="#f4f4f4" stroke="#b4b4b4"/><path d="M5.5 6.5H16.5" stroke="#b4b4b4" stroke-width="1.4"/><path d="M15 3H10M12 1L10 3L12 5" fill="none" stroke="#a9c4dd" stroke-width="1.1"/></svg>
<svg style="left:667px;top:657px" width="17" height="16" viewBox="0 0 17 16"><path d="M0.5 8V0.5H10.5V5" fill="none" stroke="#b4b4b4"/><rect x="5.5" y="6.5" width="11" height="9" fill="#f4f4f4" stroke="#b4b4b4"/><path d="M5.5 6.5H16.5" stroke="#a9c4dd" stroke-width="1.4"/><path d="M1 12H6M4 10L6 12L4 14" fill="none" stroke="#a9c4dd" stroke-width="1.1"/></svg>
<svg style="left:721px;top:658px" width="12" height="14" viewBox="0 0 12 14"><rect x="0.5" y="0.5" width="10.5" height="13" fill="#fff" stroke="#6f6f6f"/><path d="M2.5 4H9M2.5 6.8H9M2.5 9.6H9" stroke="#8a8a8a" stroke-width="0.9"/></svg>
<div class="a" style="left:741px;top:656px;width:24px;height:18px;background:#d4b8e3"></div>
<svg style="left:746px;top:657px" width="12" height="17" viewBox="0 0 12 17"><rect x="0.5" y="0.5" width="10.5" height="9" fill="#fff" stroke="#6f6f6f"/><path d="M2.5 3.5H9M2.5 6H9" stroke="#8a8a8a" stroke-width="0.9"/><path d="M0.5 17V11.5H11V17" fill="#fff" stroke="#6f6f6f"/><path d="M2.5 14H9" stroke="#8a8a8a" stroke-width="0.9"/></svg>
<svg style="left:771px;top:658px" width="16" height="14" viewBox="0 0 16 14"><rect x="0.5" y="0.5" width="6.5" height="13" fill="#fff" stroke="#6f6f6f"/><rect x="9" y="0.5" width="6.5" height="13" fill="#fff" stroke="#6f6f6f"/><path d="M2.2 4H5.2M2.2 7H5.2M2.2 10H5.2M10.7 4H13.7M10.7 7H13.7M10.7 10H13.7" stroke="#8a8a8a" stroke-width="0.9"/></svg>
<svg style="left:797px;top:657px" width="16" height="16" viewBox="0 0 16 16"><rect x="0" y="0" width="7" height="10" fill="#fff"/><rect x="8.5" y="0" width="7" height="10" fill="#fff"/><rect x="0" y="11" width="7" height="5" fill="#fff"/><rect x="8.5" y="11" width="7" height="5" fill="#fff"/><path d="M0 0.5H6.5V9.5H0M15.5 0.5H9V9.5H15.5M0 11.5H6.5V15.5M15.5 11.5H9V15.5" fill="none" stroke="#6f6f6f" stroke-width="1"/><path d="M0 3.5H5M0 6.5H5M10.5 3.5H15.5M10.5 6.5H15.5M0 14.5H5M10.5 14.5H15.5" stroke="#999" stroke-width="0.9"/></svg>
<div class="a" id="zst" style="left:834px;top:658.5px;font-size:13px;line-height:13px;color:#333">87.25%</div>
<div class="dd" style="left:897px;top:662.5px;border-left-width:2.5px;border-right-width:2.5px;border-top-width:3px;border-top-color:#111"></div>
<svg style="left:906px;top:656px" width="16" height="16" viewBox="0 0 16 16"><circle cx="7.6" cy="7.8" r="7" fill="none" stroke="#333" stroke-width="1.1"/><path d="M3.8 7.8H11.4" stroke="#333" stroke-width="1.3"/></svg>
<div class="a" style="left:928px;top:663.5px;width:91px;height:1.5px;background:#333"></div>
<div class="a" style="left:965px;top:660px;width:4.5px;height:8px;background:#111"></div>
<div class="a" style="left:973.5px;top:660px;width:1px;height:8px;background:#333"></div>
<svg style="left:1023px;top:656px" width="16" height="16" viewBox="0 0 16 16"><circle cx="7.8" cy="7.8" r="7" fill="none" stroke="#333" stroke-width="1.1"/><path d="M4 7.8H11.6M7.8 4V11.6" stroke="#333" stroke-width="1.3"/></svg>
<svg style="left:1044px;top:657px" width="15" height="13" viewBox="0 0 15 13"><path d="M0.5 12.5L14 0.5M5 12.5L14.5 4M9.5 12.5L14.5 8" stroke="#555" stroke-width="1"/></svg>

</body></html>
